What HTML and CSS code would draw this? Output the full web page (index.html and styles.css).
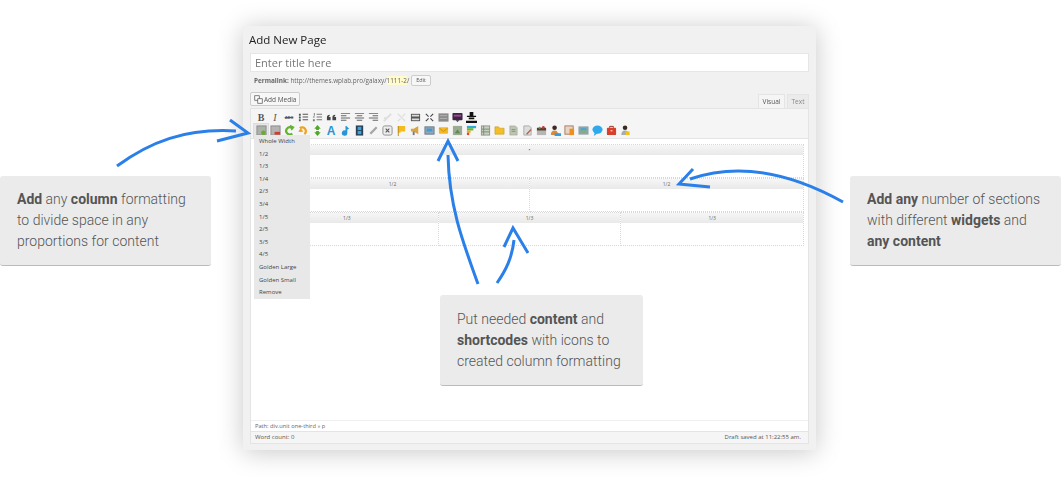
FILE: index.html
```html
<!DOCTYPE HTML>
<html>
<head>
<title>Add New Page</title>
<link rel="stylesheet" href="styles.css">
</head>
<body>
<div class="stage">
  <div class="window">
    <div class="pageTitle">Add New Page</div>
    <div class="titleInput">Enter title here</div>
    <div class="permalink">
      <b>Permalink:</b>&nbsp;<span>http://themes.wplab.pro/galaxy/<mark>1111-2</mark>/</span>
      <button class="editBtn">Edit</button>
    </div>
    <div class="mediaRow">
      <button class="mediaBtn">
        <svg class="ic" viewBox="0 0 12 12"><rect x="1" y="1" width="6" height="6" fill="#fff" stroke="#555"/><rect x="5" y="5" width="6" height="6" fill="#fff" stroke="#555"/></svg>
        Add Media
      </button>
      <div class="tabs"><span class="tab active">Visual</span><span class="tab">Text</span></div>
    </div>

    <div class="editor">
      <div class="toolbar">
        <div class="tbRow">
          <span class="tb txt"><b>B</b></span>
          <span class="tb txt"><i>I</i></span>
          <span class="tb txt abc">ABC</span>
          <span class="tb"><svg class="ic" viewBox="0 0 12 12" fill="#555"><path d="M1 2h2v2H1zM1 5h2v2H1zM1 8h2v2H1zM5 2h6v1H5zM5 5h6v1H5zM5 8h6v1H5z"/></svg></span>
          <span class="tb"><svg class="ic" viewBox="0 0 12 12" fill="#777"><path d="M2 1h1v3H2zM1 5h2v1H1zM1 8h2v2H1zM5 2h6v1H5zM5 5h6v1H5zM5 8h6v1H5z"/></svg></span>
          <span class="tb"><svg class="ic" viewBox="0 0 12 12" fill="#444"><path d="M1 6c0-2 1-3 3-3v1.500C3 4.500 3 5 3 5.500h2V9H1zM7 6c0-2 1-3 3-3v1.500C9 4.500 9 5 9 5.500h2V9H7z"/></svg></span>
          <span class="tb"><svg class="ic" viewBox="0 0 12 12" fill="#666"><path d="M1 1h10v1H1zM1 3.500h6v1H1zM1 6h10v1H1zM1 8.500h6v1H1z"/></svg></span>
          <span class="tb"><svg class="ic" viewBox="0 0 12 12" fill="#666"><path d="M1 1h10v1H1zM3 3.500h6v1H3zM1 6h10v1H1zM3 8.500h6v1H3z"/></svg></span>
          <span class="tb"><svg class="ic" viewBox="0 0 12 12" fill="#666"><path d="M1 1h10v1H1zM5 3.500h6v1H5zM1 6h10v1H1zM5 8.500h6v1H5z"/></svg></span>
          <span class="tb"><svg class="ic" viewBox="0 0 12 12" fill="none" stroke="#ddd" stroke-width="2"><path d="M2 10l3-3M7 5l3-3M4 6L2.500 7.500M8 4l-3 3"/></svg></span>
          <span class="tb"><svg class="ic" viewBox="0 0 12 12" fill="none" stroke="#e0e0e0" stroke-width="1.500"><path d="M2 10l3-3M7 5l3-3M2 2l8 8"/></svg></span>
          <span class="tb"><svg class="ic" viewBox="0 0 12 12"><path d="M1 2h10v8H1z" fill="#555"/><path fill="#ddd" d="M2 3h8v2H2zM2 7h8v2H2z"/></svg></span>
          <span class="tb"><svg class="ic" viewBox="0 0 12 12" fill="none" stroke="#444" stroke-width="1.200"><path d="M2 2l3 3M10 2L7 5M2 10l3-3M10 10L7 7"/></svg></span>
          <span class="tb"><svg class="ic" viewBox="0 0 12 12"><rect x=".5" y="1.500" width="11" height="9" fill="#8b8b8b"/><path d="M2 4h8M2 7h8" stroke="#b5b5b5"/></svg></span>
          <span class="tb"><svg class="ic" viewBox="0 0 12 12"><rect x=".5" y="1" width="11" height="8" rx="1" fill="#3b2742"/><rect x="2" y="3" width="8" height="2" fill="#a7449b"/><path d="M4 9h4l-2 2z" fill="#3b2742"/></svg></span>
          <span class="tb"><svg class="ic" viewBox="0 0 12 12" fill="#111"><path d="M4 0h4v4H4zM1 4h10v1.500H1zM3 6h6v2H3zM0 9.500h12V12H0z"/></svg></span>
        </div>
        <div class="tbRow">
          <span class="tb on"><svg class="ic" viewBox="0 0 12 12"><rect x="1" y="1" width="10" height="10" fill="#aab3a8" stroke="#8a8a8a"/><circle cx="8" cy="8.500" r="2.500" fill="#6cab2f"/></svg></span>
          <span class="tb"><svg class="ic" viewBox="0 0 12 12"><rect x="1" y="1" width="10" height="10" fill="#b4b4b4" stroke="#8a8a8a"/><rect x="5" y="7.500" width="6" height="3" fill="#d33b2c"/></svg></span>
          <span class="tb"><svg class="ic" viewBox="0 0 12 12" fill="none" stroke="#64b32c" stroke-width="2.500"><path d="M9 9.500A4 4 0 1 1 8.500 3"/><path d="M6.500 0.500l4 2-2.500 3" stroke-width="1.500" fill="#64b32c"/></svg></span>
          <span class="tb"><svg class="ic" viewBox="0 0 12 12" fill="none" stroke="#f0a11f" stroke-width="2.500"><path d="M2 3.500A4 4 0 1 1 7 10"/><path d="M1 7h4l-2-3z" stroke-width="1" fill="#f0a11f"/></svg></span>
          <span class="tb"><svg class="ic" viewBox="0 0 12 12" fill="#4fa82a"><path d="M6 0l3.500 4h-2v1.500h-3V4h-2zM6 12l3.500-4h-2V6.500h-3V8h-2z"/></svg></span>
          <span class="tb txt letterA">A</span>
          <span class="tb"><svg class="ic" viewBox="0 0 12 12" fill="#2a94d6"><path d="M7 1l3 3-2 1v4a3 3 0 1 1-2-3V1z"/></svg></span>
          <span class="tb"><svg class="ic" viewBox="0 0 12 12"><rect x="2" y="0.500" width="8" height="11" fill="#2c4155"/><rect x="4" y="2" width="4" height="3.500" fill="#3fa3dc"/><rect x="4" y="6.500" width="4" height="3.500" fill="#3fa3dc"/></svg></span>
          <span class="tb"><svg class="ic" viewBox="0 0 12 12" fill="none" stroke="#a5a5a5" stroke-width="2.500"><path d="M2.500 9.500l7-7"/></svg></span>
          <span class="tb"><svg class="ic" viewBox="0 0 12 12" fill="#eee" stroke="#8c8c8c"><rect x="1" y="1" width="10" height="10" rx="2"/><path d="M4 4l4 4M8 4l-4 4" stroke="#555" stroke-width="1.200"/></svg></span>
          <span class="tb"><svg class="ic" viewBox="0 0 12 12"><path d="M2 1h8v6H5v1.500H2z" fill="#f3bb1f"/><path d="M2 1h1v11H2z" fill="#b98a1a"/></svg></span>
          <span class="tb"><svg class="ic" viewBox="0 0 12 12"><path d="M1 4h3l5-3v9L4 7H1z" fill="#d9a441"/><path d="M3 7h2v4H3z" fill="#777"/></svg></span>
          <span class="tb"><svg class="ic" viewBox="0 0 12 12"><rect x="1" y="2" width="10" height="8" fill="#8fa6b4" stroke="#6b7d88"/><rect x="3" y="4" width="6" height="3" fill="#3f9ad6"/></svg></span>
          <span class="tb"><svg class="ic" viewBox="0 0 12 12"><rect x="1" y="2.500" width="10" height="7" rx="1" fill="#f2b924"/><path d="M1.500 3.500L6 7l4.500-3.500" fill="none" stroke="#c98e14"/></svg></span>
          <span class="tb"><svg class="ic" viewBox="0 0 12 12"><rect x="1" y="1" width="10" height="10" fill="#9aaa94"/><path d="M3 9l3-4 3 4z" fill="#5f8c4a"/></svg></span>
          <span class="tb"><svg class="ic" viewBox="0 0 12 12"><path d="M1 1h10v2.500H1z" fill="#35a8dc"/><path d="M1 3.500h7V6H1z" fill="#66b936"/><path d="M1 6h4v2.500H1z" fill="#f0a51e"/><path d="M1 8.500h2.500V11H1z" fill="#e0482d"/></svg></span>
          <span class="tb"><svg class="ic" viewBox="0 0 12 12"><rect x="1.500" y="1" width="9" height="10" fill="#c7cfc0" stroke="#8c9686"/><path d="M4 1v10M1.500 4.500h9M1.500 7.500h9" stroke="#7c8a72"/></svg></span>
          <span class="tb"><svg class="ic" viewBox="0 0 12 12"><path d="M1 2h4l1 1.500h5V10H1z" fill="#f3bf26" stroke="#c69417" stroke-width=".6"/></svg></span>
          <span class="tb"><svg class="ic" viewBox="0 0 12 12"><path d="M2 1h6l2 2v8H2z" fill="#bcc4b2" stroke="#98a08e" stroke-width=".6"/><path d="M4 5h4M4 7h4" stroke="#7d9a5d"/></svg></span>
          <span class="tb"><svg class="ic" viewBox="0 0 12 12"><path d="M2 1h6l2 2v8H2z" fill="#ddd" stroke="#999" stroke-width=".8"/><path d="M5 10l5-5" stroke="#b4624a" stroke-width="1.500"/></svg></span>
          <span class="tb"><svg class="ic" viewBox="0 0 12 12"><rect x="1" y="5" width="10" height="6" fill="#b5b5b5"/><path d="M1 3h10v3H1z" fill="#5a3e32"/><circle cx="8" cy="2.500" r="1.500" fill="#d3382b"/><circle cx="4" cy="3" r="1.200" fill="#6aa532"/></svg></span>
          <span class="tb"><svg class="ic" viewBox="0 0 12 12"><circle cx="5" cy="3" r="2.500" fill="#3a2a22"/><path d="M1 11c0-4 2-5 4-5s3 1 3 2l3 3z" fill="#d98a3a"/><path d="M5 9h7v3H5z" fill="#2f9de0"/></svg></span>
          <span class="tb"><svg class="ic" viewBox="0 0 12 12"><rect x="1" y="1" width="9" height="9" fill="#e7d6c6" stroke="#a8765a"/><rect x="6" y="4" width="5" height="7" fill="#ef8f1d"/></svg></span>
          <span class="tb"><svg class="ic" viewBox="0 0 12 12"><rect x=".5" y="1.500" width="11" height="9" fill="#8ea3ab"/><rect x="3" y="3.500" width="6" height="2.500" fill="#3ea9de"/><rect x="3" y="6" width="6" height="2" fill="#83bb3f"/></svg></span>
          <span class="tb"><svg class="ic" viewBox="0 0 12 12" fill="#2fa9ee"><ellipse cx="6" cy="5" rx="5.500" ry="4.500"/><path d="M3 8l-1 4 4-3z"/></svg></span>
          <span class="tb"><svg class="ic" viewBox="0 0 12 12"><rect x="1" y="3" width="10" height="8" rx="1" fill="#d8402b"/><path d="M4 3V1.500h4V3" fill="none" stroke="#8f2a1c"/><rect x="5" y="5.500" width="2" height="1.500" fill="#f6c9be"/></svg></span>
          <span class="tb"><svg class="ic" viewBox="0 0 12 12"><circle cx="5.500" cy="3" r="2.500" fill="#3a2a22"/><path d="M1.500 11c0-4 2-5 4-5s4 1 4 5z" fill="#a5adb3"/><rect x="6" y="7" width="4.500" height="4" fill="#f2c21c"/></svg></span>
        </div>
      </div>

      <div class="content">
        <div class="secRow">
          <div class="col"><div class="colHead">&bull;</div></div>
        </div>
        <div class="secRow">
          <div class="col"><div class="colHead">1/2</div></div>
          <div class="col"><div class="colHead">1/2</div></div>
        </div>
        <div class="secRow">
          <div class="col"><div class="colHead">1/3</div></div>
          <div class="col"><div class="colHead">1/3</div></div>
          <div class="col"><div class="colHead">1/3</div></div>
        </div>
      </div>

      <div class="pathRow">Path: div.unit one-third &raquo; p</div>
      <div class="statusRow">
        <span>Word count: 0</span>
        <span class="draft">Draft saved at 11:22:55 am.</span>
      </div>

      <div class="colMenu">
        <div>Whole Width</div>
        <div>1/2</div>
        <div>1/3</div>
        <div>1/4</div>
        <div>2/3</div>
        <div>3/4</div>
        <div>1/5</div>
        <div>2/5</div>
        <div>3/5</div>
        <div>4/5</div>
        <div>Golden Large</div>
        <div>Golden Small</div>
        <div>Remove</div>
      </div>
    </div>
  </div>

  <svg class="arrows" viewBox="0 0 1061 477" fill="none">
    <path d="M117 166C150 142 185 128 236 131"/>
    <path d="M230 120L248 133L217 141"/>
    <path d="M478 284C462 240 449 205 448 155"/>
    <path d="M438 161L448 141L458 161"/>
    <path d="M497 283C506 270 512 258 514 240"/>
    <path d="M504 247L513 228L528 253"/>
    <path d="M843 202C800 178 745 160 690 179"/>
    <path d="M693 169L679 184L710 187"/>
  </svg>

  <div class="note noteLeft"><b>Add</b> any <b>column</b> formatting<br>to divide space in any<br>proportions for content</div>
  <div class="note noteMid">Put needed <b>content</b> and<br><b>shortcodes</b> with icons to<br>created column formatting</div>
  <div class="note noteRight"><b>Add any</b> number of sections<br>with different <b>widgets</b> and<br><b>any content</b></div>
</div>
</body>
</html>
```

FILE: styles.css
```css
body {
  margin: 0;
  background: #fff;
}

.stage {
  position: relative;
  width: 1061px;
  height: 477px;
  overflow: hidden;
}

/* the screenshot of the wp editor */
.window {
  box-sizing: border-box;
  display: flex;
  flex-direction: column;
  width: 573px;
  height: 424px;
  margin: 26px 0 0 243px;
  padding: 0 7px 6px;
  background: #f1f1f1;
  box-shadow: 0 2px 24px rgba(0,0,0,.22);
  font-family: "Open Sans", sans-serif;
  color: #444;
  filter: blur(.4px);
}

.pageTitle {
  height: 27px;
  margin-left: -1px;
  font-size: 11.500px;
  line-height: 27px;
  color: #222;
}

.titleInput {
  box-sizing: border-box;
  height: 19px;
  padding-left: 4px;
  background: #fff;
  border: 1px solid #e6e6e6;
  font-size: 11px;
  line-height: 17px;
  color: #777;
}

.permalink {
  display: flex;
  align-items: center;
  height: 16px;
  margin-left: 4px;
  font-size: 6.400px;
  color: #666;
}

.permalink mark {
  background: #fffbcc;
  color: #666;
}

.editBtn {
  height: 11px;
  margin-left: 2px;
  padding: 0 4px;
  background: #f7f7f7;
  border: 1px solid #ccc;
  border-radius: 2px;
  font: 5.500px "Open Sans", sans-serif;
  color: #555;
}

.mediaRow {
  display: flex;
  justify-content: space-between;
  align-items: flex-end;
  height: 20px;
}

.mediaBtn {
  display: flex;
  align-items: center;
  gap: 1px;
  height: 14px;
  margin-bottom: 2px;
  padding: 0 3px;
  background: #f7f7f7;
  border: 1px solid #ccc;
  border-radius: 2px;
  font: 6.500px "Open Sans", sans-serif;
  color: #555;
}

.mediaBtn .ic {
  width: 9px;
  height: 9px;
}

.tabs {
  display: flex;
  gap: 2px;
}

.tab {
  box-sizing: border-box;
  width: 22px;
  height: 14px;
  background: #ebebeb;
  border: 1px solid #e4e4e4;
  border-bottom: none;
  font-size: 6.500px;
  line-height: 13px;
  text-align: center;
  color: #888;
}

.tab.active {
  width: 27px;
  background: #f5f5f5;
  color: #555;
}

.editor {
  position: relative;
  display: flex;
  flex-direction: column;
  flex: 1;
  border: 1px solid #e4e4e4;
  background: #fff;
}

.toolbar {
  box-sizing: border-box;
  height: 30px;
  padding: 2px 0 0 3px;
  background: #f5f5f5;
  border-bottom: 1px solid #e4e4e4;
}

.tbRow {
  display: flex;
  height: 13px;
}

.tb {
  box-sizing: border-box;
  display: flex;
  align-items: center;
  justify-content: center;
  flex: none;
  width: 14px;
  height: 13px;
}

.tb.on {
  background: #e6e6e6;
  outline: 1px solid #ddd;
}

.ic {
  display: block;
  width: 11px;
  height: 11px;
}

.txt {
  font: 10px "Liberation Serif", serif;
  color: #555;
}

.abc {
  font: 700 4px "Liberation Sans", sans-serif;
  text-decoration: line-through;
  color: #555;
}

.letterA {
  font: 700 12px "Liberation Sans", sans-serif;
  color: #2a94d6;
}

.content {
  flex: 1;
  padding: 5px 4px 0 4px;
}

.secRow {
  display: flex;
  height: 34px;
}

.col {
  box-sizing: border-box;
  flex: 1;
  border: 1px dotted #d8d8d8;
  border-left-width: 0;
}

.col:first-child {
  border-left-width: 1px;
}

.colHead {
  height: 10px;
  background: linear-gradient(to bottom, #f6f6f6, #e9e9e9);
  font-size: 5px;
  line-height: 10px;
  text-align: center;
  color: #666;
}

.pathRow {
  box-sizing: border-box;
  height: 11px;
  padding-left: 4px;
  border-top: 1px solid #efefef;
  font-size: 5.700px;
  line-height: 10px;
  color: #666;
}

.statusRow {
  box-sizing: border-box;
  display: flex;
  justify-content: space-between;
  height: 12px;
  padding: 0 7px 0 4px;
  background: #f5f5f5;
  border-top: 1px solid #e4e4e4;
  font-size: 6px;
  line-height: 11px;
  color: #555;
}

.colMenu {
  position: absolute;
  left: 3px;
  top: 26px;
  width: 56px;
  background: #e8e8e8;
  font-size: 6px;
  color: #444;
}

.colMenu div {
  height: 12.600px;
  padding-left: 5px;
  line-height: 12.600px;
}

.arrows {
  position: absolute;
  left: 0;
  top: 0;
  width: 1061px;
  height: 477px;
  stroke: #2a80e8;
  stroke-width: 3;
}

/* callouts sit on top of the picture */
.note {
  position: absolute;
  box-sizing: border-box;
  padding: 13px 0 0 17px;
  background: #ebebeb;
  border-radius: 3px;
  border-bottom: 1px solid #bbb;
  font: 300 14px/21px Roboto, sans-serif;
  color: #555;
}

.note b {
  font-weight: 700;
  color: #555;
}

.noteLeft {
  left: 0;
  top: 176px;
  width: 211px;
  height: 90px;
}

.noteRight {
  left: 850px;
  top: 176px;
  width: 211px;
  height: 90px;
}

.noteMid {
  left: 440px;
  top: 295px;
  width: 203px;
  height: 91px;
  padding-top: 14px;
}
```
